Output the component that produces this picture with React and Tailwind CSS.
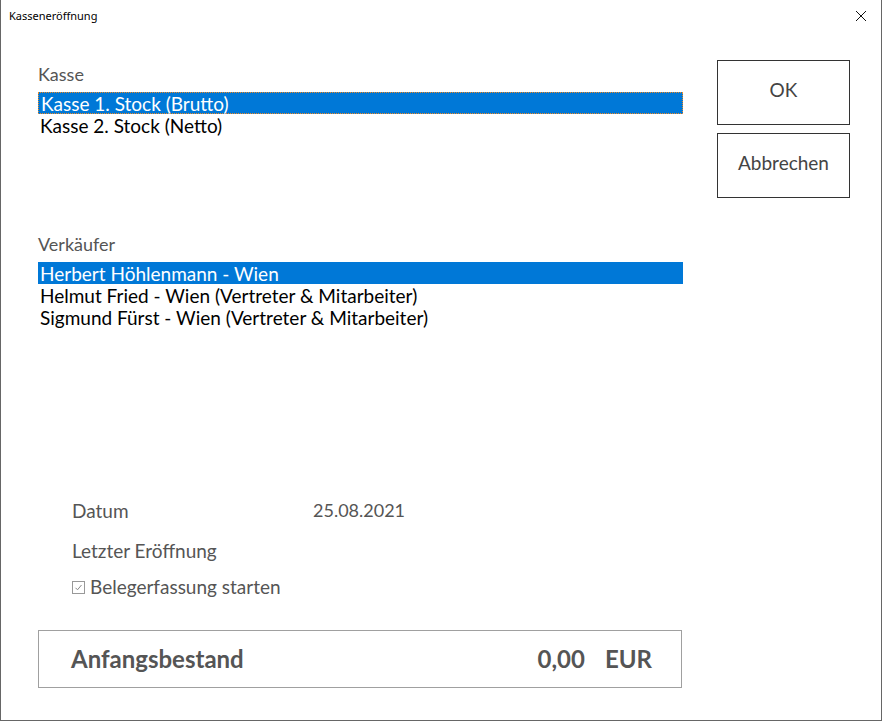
import React, { useState } from "react";

const kassen = ["Kasse 1. Stock (Brutto)", "Kasse 2. Stock (Netto)"];
const verkaeufer = [
  "Herbert Höhlenmann - Wien",
  "Helmut Fried - Wien (Vertreter & Mitarbeiter)",
  "Sigmund Fürst - Wien (Vertreter & Mitarbeiter)",
];

const ListBox = ({ items, selected, onSelect, focus }) => (
  <div className="flex flex-col w-[645px]">
    {items.map((item, i) => (
      <div
        key={item}
        onClick={() => onSelect(i)}
        className={`h-[22px] pl-[2px] flex items-center text-[19px] leading-none cursor-default ${
          selected === i
            ? "bg-[#0078d7] text-white"
            : "text-black"
        } ${selected === i && focus ? "border border-dotted border-[#f08a24] pl-[1px]" : ""}`}
      >
        {item}
      </div>
    ))}
  </div>
);

export default function App() {
  const [kasse, setKasse] = useState(0);
  const [person, setPerson] = useState(0);
  const [beleg, setBeleg] = useState(true);

  return (
    <div
      className="w-[882px] h-[721px] bg-white border-x border-b border-[#666666] flex flex-col overflow-hidden"
      style={{ fontFamily: "Lato, 'Liberation Sans', sans-serif" }}
    >
      {/* titlebar */}
      <div className="h-[32px] flex items-center justify-between pl-[8px] pr-[14px] shrink-0">
        <div className="text-[11px] text-black" style={{ fontFamily: "'Noto Sans', sans-serif" }}>
          Kasseneröffnung
        </div>
        <svg width="12" height="12" viewBox="0 0 12 12" className="mb-[1px]">
          <path d="M1 1 L11 11 M11 1 L1 11" stroke="#111" strokeWidth="1" />
        </svg>
      </div>

      <div className="flex flex-1 pl-[37px] pt-[28px]">
        {/* left column */}
        <div className="flex flex-col w-[645px]">
          <div className="text-[18px] text-[#555555] leading-none h-[32px] pt-[5px]">Kasse</div>
          <ListBox items={kassen} selected={kasse} onSelect={setKasse} focus />

          <div className="text-[18px] text-[#555555] leading-none h-[32px] pt-[5px] mt-[94px]">
            Verkäufer
          </div>
          <ListBox items={verkaeufer} selected={person} onSelect={setPerson} />

          <div className="flex flex-col mt-[169px] pl-[34px] text-[19px] text-[#555555]">
            <div className="flex h-[40px]">
              <div className="w-[241px]">Datum</div>
              <div className="text-[18px]">25.08.2021</div>
            </div>
            <div className="h-[36px]">Letzter Eröffnung</div>
            <label className="flex items-center gap-[5px] cursor-pointer">
              <input
                type="checkbox"
                className="sr-only"
                checked={beleg}
                onChange={() => setBeleg(!beleg)}
              />
              <span className="w-[13px] h-[13px] border border-[#999999] flex items-center justify-center">
                {beleg && (
                  <svg width="9" height="9" viewBox="0 0 9 9">
                    <path d="M1.5 4.8 L3.5 6.8 L7.5 2" stroke="#888" strokeWidth="1" fill="none" />
                  </svg>
                )}
              </span>
              Belegerfassung starten
            </label>
          </div>

          <div className="mt-[28px] w-[644px] h-[58px] border border-[#a0a0a0] flex items-center pl-[32px] pr-[29px] text-[24px] font-bold text-[#555555]">
            <div className="flex-1">Anfangsbestand</div>
            <div>0,00</div>
            <div className="ml-[20px]">EUR</div>
          </div>
        </div>

        {/* right column buttons */}
        <div className="flex flex-col gap-[8px] ml-[34px]">
          <button className="w-[133px] h-[65px] pb-[4px] border border-[#333333] bg-white text-[19px] text-[#444444]">
            OK
          </button>
          <button className="w-[133px] h-[65px] pb-[4px] border border-[#333333] bg-white text-[19px] text-[#444444]">
            Abbrechen
          </button>
        </div>
      </div>
    </div>
  );
}
